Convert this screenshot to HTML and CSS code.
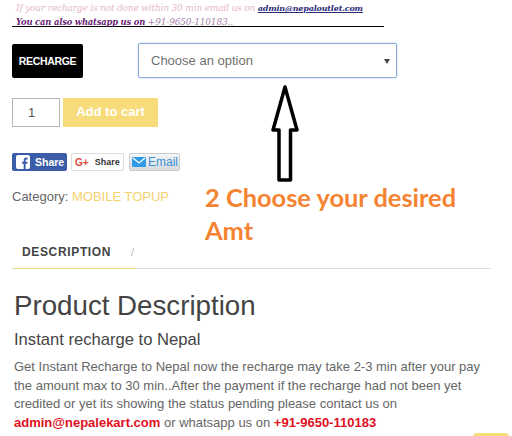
FILE: index.html
```html
<!DOCTYPE html>
<html lang="en">
<head>
<meta charset="utf-8">
<title>Recharge</title>
<link rel="stylesheet" href="styles.css">
</head>
<body>
<div class="page">
  <div class="notice">
    <p class="n1">If your recharge is not done within 30 min email us on <a class="nmail">admin@nepaloutlet.com</a></p>
    <p class="n2">You can also whatsapp us on <span class="nphone">+91-9650-110183..</span></p>
  </div>
  <div class="variation">
    <div class="badge">RECHARGE</div>
    <div class="select"><span>Choose an option</span><i class="caret"></i></div>
  </div>
  <div class="cart">
    <div class="qty">1</div>
    <div class="add">Add to cart</div>
  </div>
  <div class="share">
    <div class="btn fb">
      <svg class="fbi" viewBox="0 0 14 14" width="14" height="14"><rect width="14" height="14" rx="2" fill="#fff"/><path d="M9.6 14V8.7h1.7l.3-2H9.6V5.5c0-.6.2-1 1-1h1V2.700c-.3 0-.8-.1-1.400-.1-1.500 0-2.500.9-2.500 2.600v1.500H6v2h1.700V14z" fill="#3b5ca8"/></svg>
      <span>Share</span>
    </div>
    <div class="btn gp"><span class="g">G+</span><span>Share</span></div>
    <div class="btn em">
      <svg viewBox="0 0 14 10" width="14" height="10"><rect width="14" height="10" rx="1" fill="#2f9be8"/><path d="M1 1l6 5 6-5" fill="none" stroke="#fff" stroke-width="1.300"/></svg>
      <span>Email</span>
    </div>
  </div>
  <div class="main">
    <div class="cat">Category: <a>MOBILE TOPUP</a></div>
    <div class="arrowwrap">
      <svg class="arrow" viewBox="0 0 30 98" width="30" height="98"><path d="M15 3L3 46h6v50h11.500V46h6.500z" fill="#fff" stroke="#000" stroke-width="3.500" stroke-linejoin="round"/></svg>
    </div>
    <div class="callout">2 Choose your desired Amt</div>
  </div>
  <div class="tabs">
    <div class="tab">DESCRIPTION</div>
    <div class="slash">/</div>
  </div>
  <h1>Product Description</h1>
  <h2>Instant recharge to Nepal</h2>
  <p class="body">Get Instant Recharge to Nepal now the recharge may take 2-3 min after your pay the amount max to 30 min..After the payment if the recharge had not been yet credited or yet its showing the status pending please contact us on <b>admin@nepalekart.com</b> or whatsapp us on <b>+91-9650-110183</b></p>
  <div class="totop"></div>
</div>
</body>
</html>
```

FILE: styles.css
```css
* { box-sizing: border-box; }
html, body { margin: 0; padding: 0; background: #fff; }
body { width: 512px; height: 436px; overflow: hidden; font-family: "Liberation Sans", Arial, sans-serif; color: #555; }
.page { position: relative; width: 512px; height: 436px; padding-left: 12px; }
.notice { width: 372px; height: 27px; border-bottom: 1px solid #000; font-family: "DejaVu Serif", "Liberation Serif", serif; font-style: italic; font-size: 9px; line-height: 13px; white-space: nowrap; padding: 1px 0 0 4px; letter-spacing: -0.18px; }
.notice p { margin: 0; }
.n1 { color: #e6b8cc; padding-top: 1px; }
.nmail { color: #2a2a78; font-weight: bold; font-size: 8px; text-decoration: underline; }
.n2 { color: #6a1f78; font-weight: bold; font-size: 8.400px; padding-top: 1px; }
.nphone { color: #a884ac; font-weight: normal; font-size: 9px; }
.variation { display: flex; align-items: center; margin-top: 16px; }
.badge { width: 71px; height: 34px; margin-top: 1px; background: #000; border-radius: 2px; color: #fff; font-weight: bold; font-size: 10.500px; letter-spacing: -0.35px; display: flex; align-items: center; justify-content: center; }
.select { position: relative; margin-left: 55px; width: 259px; height: 35px; border: 1px solid #8cabd8; border-radius: 2px; box-shadow: 0 0 2px #a9c2e8; display: flex; align-items: center; padding-left: 12px; font-size: 13px; color: #707070; }
.caret { position: absolute; right: 6px; top: 15px; border: 3px solid transparent; border-top: 5px solid #444; border-bottom: 0; }
.cart { display: flex; margin-top: 20px; gap: 3px; }
.qty { width: 48px; height: 29px; border: 1px solid #b5b5b5; font-size: 13px; color: #555; padding: 6px 0 0 15px; }
.add { width: 95px; height: 29px; padding-bottom: 2px; background: #f8dc7c; color: #fff; font-weight: bold; font-size: 13px; display: flex; align-items: center; justify-content: center; }
.share { display: flex; gap: 4px; margin-top: 26px; height: 18px; }
.btn { height: 18px; display: flex; align-items: center; font-size: 10.500px; border-radius: 2px; }
.fb { width: 55px; background: #3b5ca8; color: #fff; font-weight: bold; padding-left: 4px; gap: 5px; }
.gp { width: 53px; background: #fff; border: 1px solid #ddd; color: #333; font-weight: bold; font-size: 9px; padding-left: 3px; gap: 6px; }
.g { color: #d9483b; font-size: 10px; }
.em { width: 51px; margin-left: 1px; background: linear-gradient(#f4f6f8, #d8dbde); border: 1px solid #ccc; color: #3a8fd0; font-size: 12px; padding-left: 2px; gap: 2px; }
.main { position: relative; margin-top: 16px; height: 47px; }
.cat { font-size: 13px; line-height: 16px; color: #666; padding-top: 2px; }
.cat a { color: #f4d26e; }
.arrowwrap { position: absolute; left: 258px; top: -103px; }
.arrow { display: block; }
.callout { position: absolute; left: 193px; top: -6px; width: 280px; font-family: Lato, "Open Sans", sans-serif; font-weight: 700; font-size: 25.400px; line-height: 33px; color: #f58432; }
.tabs { display: flex; align-items: center; width: 479px; height: 37px; border-bottom: 1px solid #ddd; margin-top: -2px; position: relative; }
.tab { flex: none; width: 124px; height: 37px; margin-bottom: -1px; padding: 8px 0 0 10px; line-height: 24px; border-bottom: 1px solid #eedb8c; font-weight: bold; font-size: 12px; color: #444; letter-spacing: 0.65px; position: relative; align-self: flex-start; }
.slash { position: absolute; left: 119px; top: 14px; font-size: 11px; color: #bbb; }
h1 { margin: 21px 0 0 2px; font-weight: normal; font-size: 27.700px; line-height: 32px; color: #444; }
h2 { margin: 8px 0 0 2px; font-weight: normal; font-size: 16.600px; line-height: 20px; color: #444; }
.body { margin: 8px 0 0 2px; width: 480px; font-size: 13px; line-height: 18.600px; color: #666; }
.body b { color: #e0101e; }
.totop { position: absolute; left: 473px; top: 433px; width: 36px; height: 10px; background: #f8dc7c; border-radius: 4px 4px 0 0; }
```
